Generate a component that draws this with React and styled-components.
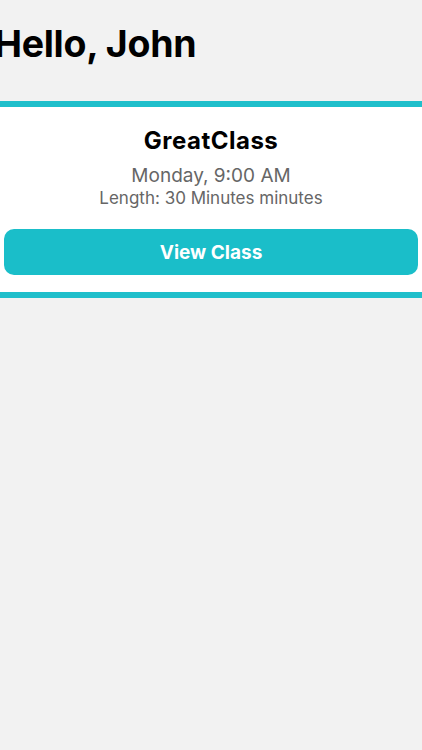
import React from "react";
import styled, { createGlobalStyle } from "styled-components";

const Global = createGlobalStyle`
  html, body { margin: 0; padding: 0; background: #f2f2f2; }
  body { font-family: Inter, "Liberation Sans", Arial, sans-serif; -webkit-font-smoothing: antialiased; }
  * { box-sizing: border-box; }
`;

const Screen = styled.div`
  min-height: 750px;
  width: 422px;
  background: #f2f2f2;
  display: flex;
  flex-direction: column;
`;

const Greeting = styled.h1`
  margin: 0 0 0 -6px;
  padding: 22px 0 0;
  height: 101px;
  font-size: 37.5px;
  line-height: 44px;
  font-weight: 700;
  letter-spacing: -0.3px;
  color: #000;
`;

const Card = styled.section`
  background: #fff;
  border-top: 6px solid #1fbfcb;
  border-bottom: 6px solid #1fbfcb;
  padding: 20px 4px 17px;
  display: flex;
  flex-direction: column;
  align-items: center;
`;

const ClassName = styled.h2`
  margin: 0;
  font-size: 24px;
  line-height: 28px;
  font-weight: 700;
  letter-spacing: 0.5px;
  color: #000;
`;

const Meta = styled.div`
  color: #666;
  font-size: ${(p) => p.size}px;
  line-height: ${(p) => p.lh}px;
  margin-top: ${(p) => p.mt || 0}px;
`;

const Button = styled.button`
  margin-top: 21px;
  width: 100%;
  height: 46px;
  border: none;
  border-radius: 10px;
  background: #1abec9;
  color: #fff;
  font-family: inherit;
  font-size: 19px;
  font-weight: 700;
  cursor: pointer;
`;

export default function App() {
  return (
    <>
      <Global />
      <Screen>
        <Greeting>Hello, John</Greeting>
        <Card>
          <ClassName>GreatClass</ClassName>
          <Meta size={19} lh={24} mt={9}>Monday, 9:00 AM</Meta>
          <Meta size={17} lh={20}>Length: 30 Minutes minutes</Meta>
          <Button>View Class</Button>
        </Card>
      </Screen>
    </>
  );
}
